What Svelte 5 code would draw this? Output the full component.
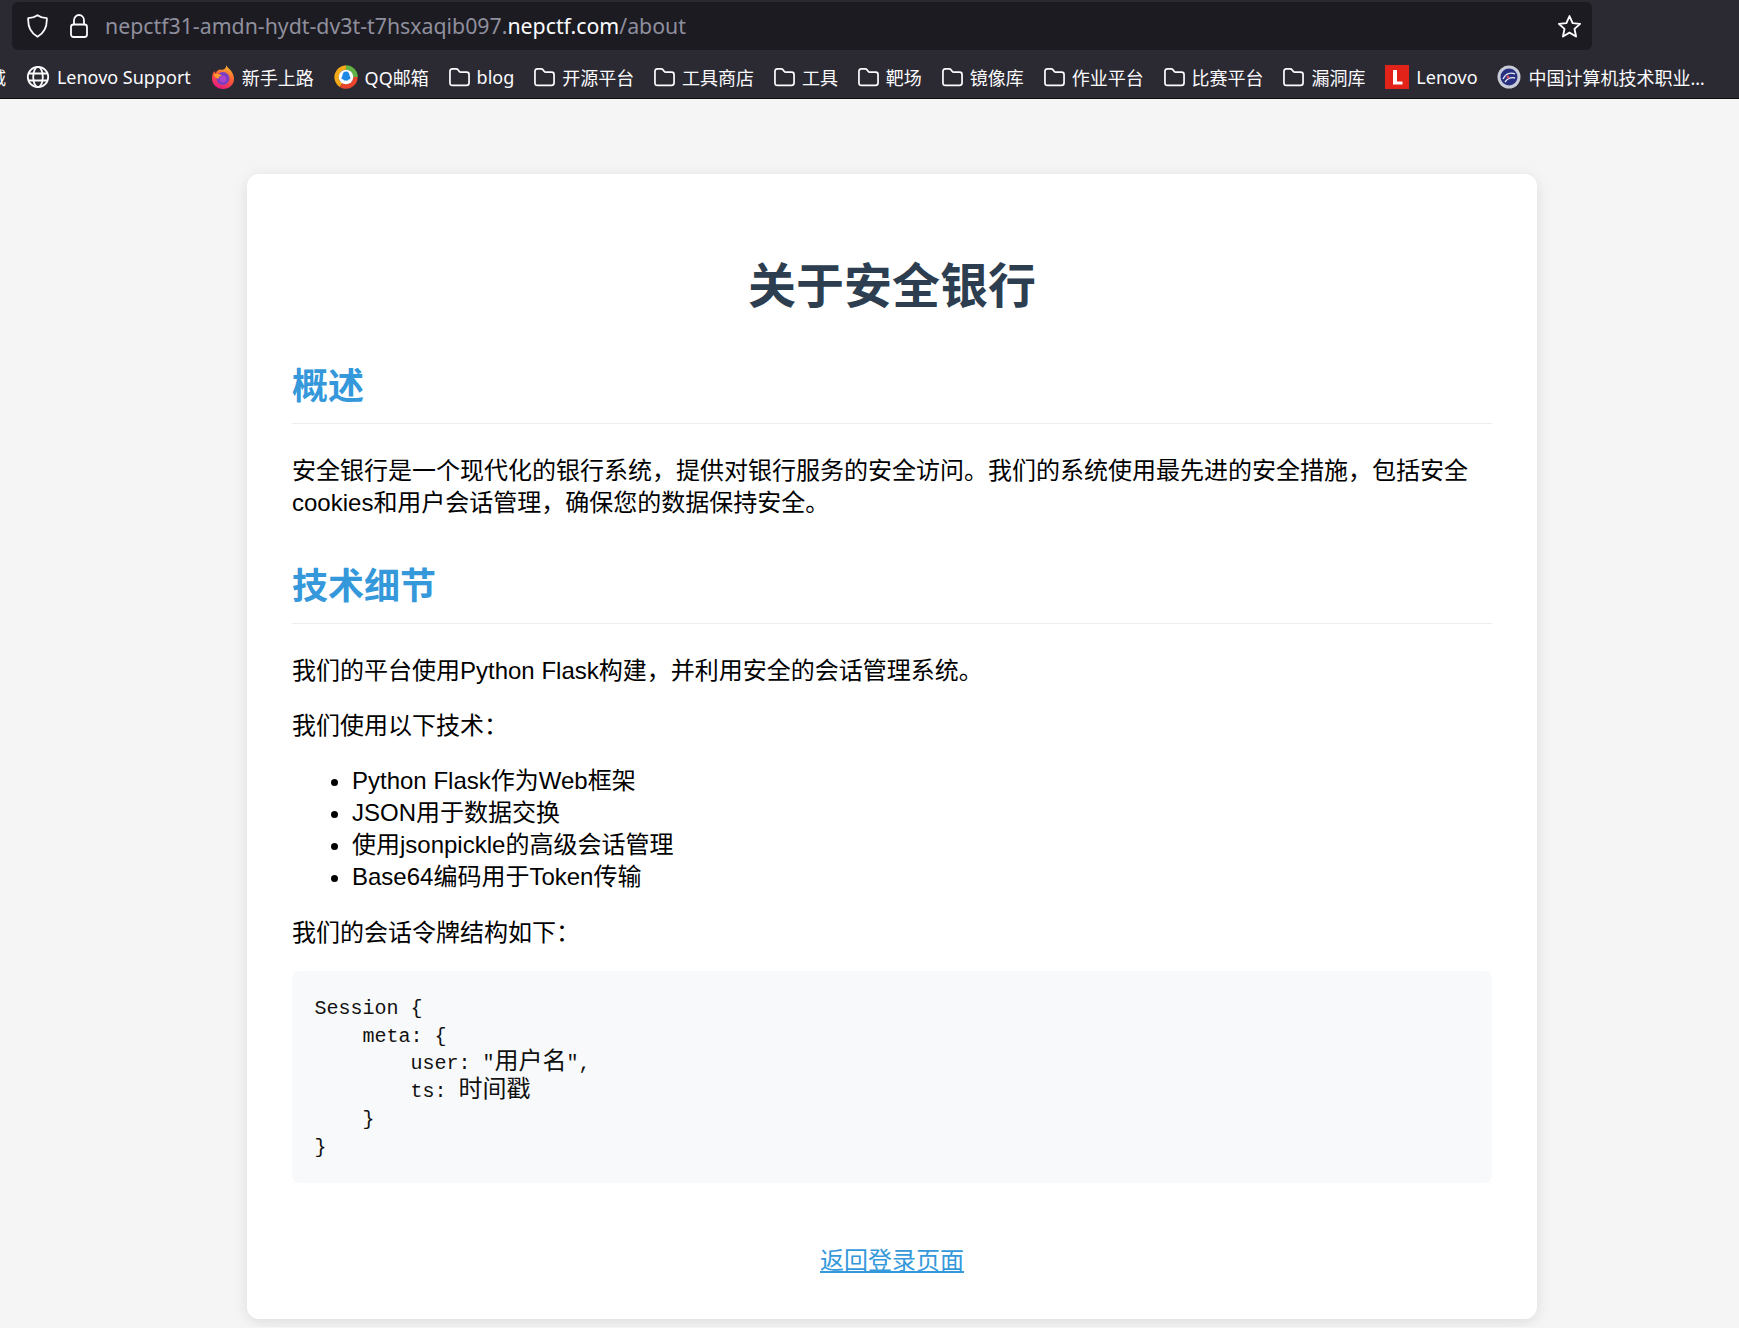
<script>
  const bookmarks = [
    { icon: 'globe', label: 'Lenovo Support' },
    { icon: 'firefox', label: '新手上路' },
    { icon: 'qq', label: 'QQ邮箱' },
    { icon: 'folder', label: 'blog' },
    { icon: 'folder', label: '开源平台' },
    { icon: 'folder', label: '工具商店' },
    { icon: 'folder', label: '工具' },
    { icon: 'folder', label: '靶场' },
    { icon: 'folder', label: '镜像库' },
    { icon: 'folder', label: '作业平台' },
    { icon: 'folder', label: '比赛平台' },
    { icon: 'folder', label: '漏洞库' },
    { icon: 'lenovo', label: 'Lenovo' },
    { icon: 'badge', label: '中国计算机技术职业资格网' }
  ];
</script>

<header class="chrome">
  <div class="urlbar">
    <svg class="shield" viewBox="0 0 21 24" width="21" height="24" fill="none" stroke="#fbfbfe" stroke-width="1.8" stroke-linejoin="round">
      <path d="M10.5 1.2 C13 3 16.5 4 19.8 4.2 C20.2 12 17.5 19 10.5 22.8 C3.5 19 0.8 12 1.2 4.2 C4.5 4 8 3 10.5 1.2 Z" />
    </svg>
    <svg class="lock" viewBox="0 0 18 24" width="18" height="24" fill="none" stroke="#fbfbfe" stroke-width="1.8">
      <path d="M4 11 V6.5 C4 3.2 6.2 1 9 1 C11.8 1 14 3.2 14 6.5 V11" />
      <rect x="1" y="10.5" width="16" height="12.5" rx="2.5" />
    </svg>
    <div class="url"><span>nepctf31-amdn-hydt-dv3t-t7hsxaqib097.</span><b>nepctf.com</b><span>/about</span></div>
    <svg class="star" viewBox="0 0 24 24" width="25" height="25" fill="none" stroke="#fbfbfe" stroke-width="1.8" stroke-linejoin="round">
      <path d="M12 2 L15 8.7 L22.2 9.5 L16.8 14.3 L18.3 21.6 L12 17.9 L5.7 21.6 L7.2 14.3 L1.8 9.5 L9 8.7 Z" />
    </svg>
  </div>
  <nav class="bookmarks">
    <span class="cut">商城</span>
    {#each bookmarks as b}
      <div class="mark">
        {#if b.icon === 'globe'}
          <svg class="ico" viewBox="0 0 24 24" fill="none" stroke="#fbfbfe" stroke-width="1.8">
            <circle cx="12" cy="12" r="10.2" />
            <ellipse cx="12" cy="12" rx="4.8" ry="10.2" />
            <path d="M2.5 8.5 H21.5 M2.5 15.5 H21.5" />
          </svg>
        {:else if b.icon === 'folder'}
          <svg class="ico folder" viewBox="0 0 22 20" fill="none" stroke="#fbfbfe" stroke-width="1.8" stroke-linejoin="round">
            <path d="M1 4 Q1 1.5 3.5 1.5 H7.5 Q8.8 1.5 9.6 2.6 L10.6 4 Q11.2 5 12.5 5 H18.5 Q21 5 21 7.5 V16 Q21 18.8 18.3 18.8 H3.7 Q1 18.8 1 16 Z" />
          </svg>
        {:else if b.icon === 'firefox'}
          <svg class="ico" viewBox="0 0 24 24">
            <defs>
              <linearGradient id="ffa" x1="0.7" y1="0" x2="0.3" y2="1">
                <stop offset="0" stop-color="#ffbd2e" /><stop offset="0.5" stop-color="#ff5a36" /><stop offset="1" stop-color="#e31587" />
              </linearGradient>
            </defs>
            <path fill="url(#ffa)" d="M15 0 C16 2.5 19 4 20.5 6.5 C22.5 9.5 23 12 23 14 C23 20 18 24 12 24 C6 24 1 19.5 1 13.5 C1 10 2 7.500 3.500 6 C3.500 7.500 4.500 8 5 8 C5.500 6 7.500 4.500 9.500 4.500 C11.500 5 12.500 4.500 13.500 4 C14.500 3 15.500 2 15 0 Z" />
            <circle cx="12" cy="13.500" r="6.500" fill="#7a3fc4" />
            <circle cx="12" cy="14" r="3.200" fill="#b043c9" />
            <path fill="#ff9a2e" d="M2.500 9.500 C5 8 9 8.500 11 11 C8.500 10.500 7.500 12 8 13.500 C5.500 14 3.500 12 2.500 9.500 Z" />
          </svg>
        {:else if b.icon === 'qq'}
          <svg class="ico" viewBox="0 0 24 24" fill="none">
            <path d="M12 2.500 A9.500 9.500 0 0 1 21.500 12" stroke="#62b345" stroke-width="4.500" />
            <path d="M21.500 12 A9.500 9.500 0 0 1 7 20" stroke="#e8452c" stroke-width="4.500" />
            <path d="M7 20 A9.500 9.500 0 0 1 12 2.500" stroke="#f5a917" stroke-width="4.500" />
            <circle cx="12" cy="12" r="7.300" fill="#fff" />
            <path fill="#1e88e5" d="M12 6.500 C14.500 6.500 15.500 8.500 15.500 10.500 C16.500 12 16.800 13.800 16 14.500 C15.500 14.500 15.200 14 15 13.800 C14.800 14.500 14.500 15 14 15.500 H10 C9.500 15 9.200 14.500 9 13.800 C8.800 14 8.500 14.500 8 14.500 C7.200 13.800 7.500 12 8.500 10.500 C8.500 8.500 9.500 6.500 12 6.500 Z" />
          </svg>
        {:else if b.icon === 'lenovo'}
          <svg class="ico" viewBox="0 0 24 24">
            <rect width="24" height="24" fill="#e2231a" />
            <path fill="#fff" d="M8 5 H12 V16.500 H17.500 V19.500 H8 Z" />
          </svg>
        {:else if b.icon === 'badge'}
          <svg class="ico" viewBox="0 0 24 24" fill="none">
            <circle cx="12" cy="12" r="11.500" fill="#c9cbd6" />
            <circle cx="12" cy="12" r="8.500" fill="#27307f" />
            <path d="M6 14 C9 8 14 7 18 9 M8 17 C11 13 14 12 18 13" stroke="#e9ecf6" stroke-width="1.300" />
            <circle cx="11" cy="12" r="1.500" fill="#d94a5a" />
          </svg>
        {/if}
        <span class="label">{b.label}</span>
      </div>
    {/each}
    <svg class="tail" viewBox="0 0 24 24" fill="none" stroke="#fbfbfe" stroke-width="1.800"><circle cx="12" cy="12" r="10.200" /></svg>
  </nav>
</header>

<main class="page">
  <article class="card">
    <h1>关于安全银行</h1>

    <h2>概述</h2>
    <p class="intro">安全银行是一个现代化的银行系统，提供对银行服务的安全访问。我们的系统使用最先进的安全措施，包括安全cookies和用户会话管理，确保您的数据保持安全。</p>

    <h2 class="second">技术细节</h2>
    <p class="intro">我们的平台使用Python Flask构建，并利用安全的会话管理系统。</p>
    <p>我们使用以下技术：</p>
    <ul>
      <li>Python Flask作为Web框架</li>
      <li>JSON用于数据交换</li>
      <li>使用jsonpickle的高级会话管理</li>
      <li>Base64编码用于Token传输</li>
    </ul>
    <p class="last">我们的会话令牌结构如下：</p>
    <pre>Session {'{'}
    meta: {'{'}
        user: "<span class="wide">用户名</span>",
        ts: <span class="wide">时间戳</span>
    {'}'}
{'}'}</pre>
    <div class="back"><a href="#login">返回登录页面</a></div>
  </article>
</main>

<style>
  :global(body) {
    margin: 0;
    background: #f5f5f5;
  }

  .chrome {
    height: 98px;
    background: #2b2a33;
    border-bottom: 1.5px solid #0c0c0d;
    overflow: hidden;
    font-family: "Noto Sans", "Noto Sans CJK SC", sans-serif;
  }

  .urlbar {
    box-sizing: border-box;
    height: 48px;
    width: 1580px;
    margin: 2px 0 0 12px;
    padding: 0 10px 0 15px;
    background: #1c1b22;
    border-radius: 6px;
    display: flex;
    align-items: center;
  }

  .lock {
    margin-left: 22px;
  }

  .url {
    flex: 1;
    margin-left: 17px;
    font-size: 21.300px;
    line-height: 46px;
    color: #8f8f9d;
    white-space: nowrap;
  }

  .url b {
    font-weight: 400;
    color: #fbfbfe;
  }

  .bookmarks {
    height: 53px;
    display: flex;
    align-items: center;
    gap: 19.900px;
    margin-left: -21px;
    overflow: hidden;
    color: #fbfbfe;
    font-size: 18px;
  }

  .cut {
    flex: none;
    margin-left: -9px;
  }

  .mark {
    flex: none;
    display: flex;
    align-items: center;
    gap: 7px;
  }

  .ico {
    width: 24px;
    height: 24px;
    flex: none;
  }

  .ico.folder {
    width: 21px;
    height: 20px;
  }

  .label {
    max-width: 177px;
    overflow: hidden;
    text-overflow: ellipsis;
    white-space: nowrap;
  }

  .tail {
    width: 24px;
    height: 24px;
    flex: none;
    margin-left: 15px;
  }

  .page {
    padding: 74.500px 0 7.500px 247px;
  }

  .card {
    box-sizing: border-box;
    width: 1290px;
    height: 1145.500px;
    padding: 45px;
    background: #fff;
    border-radius: 12px;
    box-shadow: 0 3px 15px rgba(0, 0, 0, 0.1);
    font-family: "Liberation Sans", "Noto Sans CJK SC", sans-serif;
    font-size: 24px;
    line-height: 32px;
    color: #000;
  }

  h1 {
    margin: 36px 0 44.500px;
    font-size: 48px;
    line-height: 64px;
    text-align: center;
    color: #2c3e50;
  }

  h2 {
    margin: 0 0 31px;
    padding-bottom: 13px;
    border-bottom: 1.5px solid #eee;
    font-size: 36px;
    line-height: 47px;
    color: #3498db;
  }

  h2.second {
    margin-top: 43.500px;
  }

  p {
    margin: 0 0 23px;
  }

  ul {
    margin: 0 0 24px;
    padding-left: 60px;
  }

  p.last {
    margin-bottom: 22.500px;
  }

  pre {
    margin: 0;
    padding: 24px 22.500px 22px;
    background: #f8f9fa;
    border-radius: 7.500px;
    font-family: "Liberation Mono", "Noto Sans CJK SC", monospace;
    font-size: 20px;
    line-height: 27.700px;
    color: #111;
  }

  .wide {
    font-size: 24px;
    line-height: 20px;
  }

  .back {
    margin-top: 62px;
    text-align: center;
  }

  .back a {
    color: #3498db;
    text-decoration: underline;
  }
</style>
